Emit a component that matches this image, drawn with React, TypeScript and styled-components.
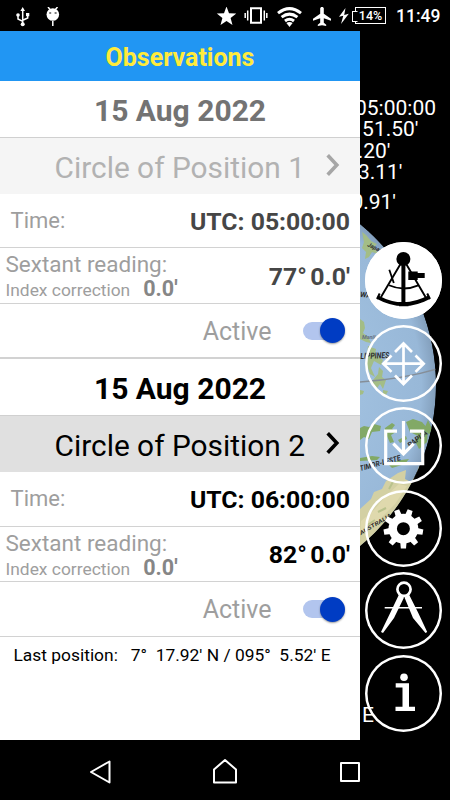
import React from "react";
import styled, { createGlobalStyle } from "styled-components";

const GlobalStyle = createGlobalStyle`
  * { box-sizing: border-box; }
  body { margin: 0; background: #000; font-family: Roboto, "Liberation Sans", sans-serif; }
`;

const Screen = styled.div`
  width: 450px;
  height: 800px;
  background: #000;
  display: grid;
  grid-template-rows: 31px 709px 60px;
  overflow: hidden;
`;

const StatusBar = styled.header`
  display: flex;
  justify-content: space-between;
  color: #fff;
`;

const StatusGroup = styled.div<{ $start?: boolean }>`
  display: flex;
  align-items: center;
  padding: ${(p) => (p.$start ? "2px 0 0 16px" : "2px 10px 0 0")};
  gap: ${(p) => (p.$start ? "16px" : "0")};
`;

const StatusIcon = styled.svg<{ $gap?: number }>`
  display: block;
  flex: none;
  margin-right: ${(p) => p.$gap ?? 0}px;
`;

const Battery = styled.div`
  width: 31px;
  height: 17px;
  border: 1px solid #fff;
  margin: -2px 10px 0 2px;
  position: relative;
  font-size: 12.5px;
  font-weight: 500;
  line-height: 16px;
  text-align: center;
  &::before {
    content: "";
    position: absolute;
    left: -4px;
    top: 3px;
    width: 4px;
    height: 9px;
    border: 1px solid #fff;
    border-right-color: #000;
    background: #000;
  }
`;

const Clock = styled.span`
  font-size: 17.5px;
  font-weight: 500;
  line-height: 20px;
  margin-top: -1px;
  width: 44px;
  white-space: nowrap;
`;

const Main = styled.main`
  display: grid;
  grid-template-columns: 360px 90px;
  min-height: 0;
`;

const Drawer = styled.section`
  background: #fff;
  display: flex;
  flex-direction: column;
`;

const Title = styled.h1`
  margin: 0;
  height: 50px;
  background: #2196f3;
  color: #ffeb3b;
  font-size: 25px;
  font-weight: 700;
  line-height: 53px;
  text-align: center;
`;

const Observation = styled.article<{ $last?: boolean }>`
  border-bottom: ${(p) => (p.$last ? "1px" : "2px")} solid #d2d2d2;
`;

const DateRow = styled.h2<{ $dim: boolean }>`
  margin: 0;
  height: 57px;
  border-bottom: 1px solid #d0d0d0;
  font-size: 30px;
  font-weight: 700;
  line-height: 59px;
  text-align: center;
  color: ${(p) => (p.$dim ? "#737373" : "#000")};
`;

const CircleRow = styled.div<{ $dim: boolean }>`
  height: 56px;
  display: flex;
  align-items: center;
  justify-content: space-between;
  padding: 2px 19.5px 0 54.5px;
  font-size: 29.85px;
  color: ${(p) => (p.$dim ? "#b2b2b2" : "#000")};
  background: ${(p) => (p.$dim ? "#f5f5f5" : "#e0e0e0")};
`;

const Row = styled.div<{ $h: number }>`
  height: ${(p) => p.$h}px;
  display: flex;
  align-items: center;
  justify-content: space-between;
  border-bottom: 1px solid #d2d2d2;
  padding: 0 10px 0 10.5px;
  &:last-child { border-bottom: 0; }
`;

const Label = styled.span<{ $size: number }>`
  font-size: ${(p) => p.$size}px;
  line-height: 26px;
  color: #9e9e9e;
  white-space: nowrap;
`;

const Value = styled.span<{ $dim: boolean; $tight?: boolean }>`
  font-size: 24.8px;
  font-weight: 700;
  line-height: 30px;
  padding-top: 2px;
  white-space: nowrap;
  word-spacing: ${(p) => (p.$tight ? "-2.6px" : "0")};
  color: ${(p) => (p.$dim ? "#464646" : "#000")};
`;

const ReadingBlock = styled.div`
  margin: 3px 0 0 -5px;
  display: flex;
  flex-direction: column;
`;

const Correction = styled.div`
  display: flex;
  align-items: baseline;
  gap: 13px;
  line-height: 24px;
`;

const CorrectionValue = styled.strong`
  font-size: 21.5px;
  font-weight: 700;
  line-height: 24px;
  color: #868686;
`;

const ActiveGroup = styled.div`
  margin-left: auto;
  display: flex;
  align-items: center;
  gap: 31.5px;
`;

const ActiveLabel = styled(Label)`
  padding-top: 2px;
`;

const Switch = styled.span`
  width: 42px;
  height: 26px;
  display: flex;
  align-items: center;
  justify-content: flex-end;
  margin-right: 5px;
`;

const Track = styled.span`
  flex: 1;
  height: 18px;
  margin-right: -14px;
  border-radius: 9px;
  background: #b2c5ee;
`;

const Thumb = styled.span`
  width: 25px;
  height: 25px;
  border-radius: 50%;
  background: #003cc3;
  box-shadow: 0 1px 2px rgba(0, 0, 0, 0.4);
`;

const LastPosition = styled.p`
  margin: 0;
  padding: 6px 0 0 13.5px;
  font-size: 17.4px;
  line-height: 24px;
  white-space: pre;
  color: #000;
`;

const MapPane = styled.section`
  position: relative;
  overflow: hidden;
  background: #000;
`;

const Globe = styled.svg`
  position: absolute;
  left: 0;
  top: 0;
`;

const Readouts = styled.div`
  height: 211px;
  padding-top: 67px;
  position: relative;
  display: flex;
  flex-direction: column;
  color: #fff;
  font-size: 21px;
`;

const Readout = styled.div<{ $end: number; $gap?: number }>`
  height: 21.4px;
  line-height: 21px;
  flex: none;
  display: flex;
  justify-content: flex-end;
  white-space: nowrap;
  margin-top: ${(p) => p.$gap ?? 0}px;
  margin-right: ${(p) => p.$end}px;
`;

const Rail = styled.nav`
  position: relative;
  display: flex;
  flex-direction: column;
  gap: 5.5px;
  padding-left: 5px;
`;

const RoundButton = styled.button<{ $on?: boolean }>`
  width: 77px;
  height: 77px;
  padding: 0;
  flex: none;
  border: 0;
  border-radius: 50%;
  box-shadow: inset 0 0 0 2.5px #fff;
  background: ${(p) => (p.$on ? "#fff" : "transparent")};
  color: ${(p) => (p.$on ? "#000" : "#fff")};
`;

const ToolIcon = styled.svg.attrs({ width: 77, height: 77, viewBox: "0 0 77 77" })`
  display: block;
`;

const East = styled.span`
  position: absolute;
  left: 2px;
  top: 672px;
  font-size: 21px;
  line-height: 24px;
  color: #fff;
`;

const NavBar = styled.footer`
  display: flex;
  align-items: center;
  gap: 75px;
  padding-left: 75px;
`;

const NavIcon = styled.svg.attrs({ width: 50, height: 60, viewBox: "0 0 50 60" })`
  display: block;
  fill: none;
  stroke: #fff;
  stroke-width: 2;
  stroke-linejoin: round;
`;

const TEETH = [0, 40, 80, 120, 160, 200, 240, 280, 320];

type ObservedProps = { dim: boolean; n: number; time: string; degrees: string };

function Observed({ dim, n, time, degrees }: ObservedProps) {
  return (
    <Observation $last={!dim}>
      <DateRow $dim={dim}>15 Aug 2022</DateRow>
      <CircleRow $dim={dim}>
        Circle of Position {n}
        <svg width="17" height="26" viewBox="0 0 17 26" fill="none" stroke={dim ? "#a6a6a6" : "#000"} strokeWidth="3.6">
          <path d="M3.7 1.2 12.8 11 3.7 20.8" />
        </svg>
      </CircleRow>
      <Row $h={dim ? 54 : 55}>
        <Label $size={22}>Time:</Label>
        <Value $dim={dim}>UTC: {time}</Value>
      </Row>
      <Row $h={dim ? 56 : 55}>
        <ReadingBlock>
          <Label $size={22.5}>Sextant reading:</Label>
          <Correction>
            <Label $size={17.4}>Index correction</Label>
            <CorrectionValue>0.0'</CorrectionValue>
          </Correction>
        </ReadingBlock>
        <Value $dim={dim} $tight>{degrees}° 0.0'</Value>
      </Row>
      <Row $h={dim ? 53 : 54}>
        <ActiveGroup>
          <ActiveLabel $size={25}>Active</ActiveLabel>
          <Switch role="switch" aria-checked="true">
            <Track />
            <Thumb />
          </Switch>
        </ActiveGroup>
      </Row>
    </Observation>
  );
}

function GlobeView() {
  return (
    <Globe width="90" height="709" viewBox="360 31 90 709">
      <defs>
        <clipPath id="disc"><circle cx="227.5" cy="385" r="208.5" /></clipPath>
        <radialGradient id="sea" gradientUnits="userSpaceOnUse" cx="227.5" cy="385" r="208.5">
          <stop offset="0.6" stopColor="#a0c0df" />
          <stop offset="0.93" stopColor="#98b8d8" />
          <stop offset="1" stopColor="#839fbc" />
        </radialGradient>
      </defs>
      <g clipPath="url(#disc)">
        <circle cx="227.5" cy="385" r="208.5" fill="url(#sea)" />
        <g fill="#a3bd86">
          <path d="M362 232l4 3 5 6 6 3-3 3 4 7-6-2-3 5-4 2 1-7-4-4 2-6z" />
          <path d="M360 319l4 3 1 6-2 5 5 4 3 6-5-1-6-3z" />
          <path d="M368 346l8 3-1 6 8 5-2 5-7-4-3 7 4 9-5-3-4-12z" />
          <path d="M373 380l5-6 1-7 4 4-1 6 4 3-3 9-3-5-3 4-4-4z" />
          <path d="M360 390l4 1-1 3-3 1zM383 390l5 1-2 4-3-1z" />
        </g>
        <g fill="#82a966">
          <path d="M360 428l4-2 5 1 5-3 7 2-1 5-8 1-3 7-5-2-4 3z" />
          <path d="M385 428l7-5 3 2-3 4 4 3-5 3 3 7-4 1-3-7-3 1zM398 440l8-4 1 3-7 4z" />
          <path d="M406 422l7-3 9 3 6 7-1 13-8 7-4-8 3-5-8-4z" />
          <path d="M428 420l4 9-3 6-4-8zM360 458l12-2 8 1-3 3-17 1zM388 464l13-4 8-1-4 5-13 4z" />
        </g>
        <path
          d="M360 509l11-10 3-7 8-3 4-8 12-8 8-3-1 9 6 3 5-7 3-9 4 8-1 9-6 14-10 13-7 12-16 20-18 17h-5z"
          fill="#d3d0a3"
        />
        <path d="M361 521l12-10 13-15 13-12 8 2-12 18-19 19-16 12z" fill="#dfd9ad" />
        <path d="M389 489l5-9M378 512l8-4M366 526l9-6" stroke="#b9c28c" strokeWidth="2" fill="none" />
        <path d="M360 382Q404 379 437 369" fill="none" stroke="#858e98" strokeWidth="1.3" />
        <g fontFamily="Roboto, sans-serif" fontStyle="italic" fontWeight="700" fill="#2c2c2c">
          <text transform="translate(367 246) rotate(26)" fontSize="6">Japan</text>
          <text transform="translate(360 297) rotate(4)" fontSize="7.5">WAN</text>
          <text transform="translate(360.5 359) rotate(-2)" fontSize="8.5" textLength="29" lengthAdjust="spacingAndGlyphs">LIPPINES</text>
          <text transform="translate(362 339)" fontSize="5.5" fill="#667384">Manila</text>
          <text transform="translate(360.5 471) rotate(-15)" fontSize="7.5" textLength="42" lengthAdjust="spacingAndGlyphs">TIMOR-LESTE</text>
          <text transform="translate(410 448) rotate(-38)" fontSize="7.5" textLength="23" lengthAdjust="spacingAndGlyphs">PAPUA</text>
          <text transform="translate(361 535) rotate(-31)" fontSize="5.5" textLength="36" lengthAdjust="spacingAndGlyphs">AUSTRALIA</text>
        </g>
      </g>
    </Globe>
  );
}

function Status() {
  return (
    <StatusBar>
      <StatusGroup $start>
        <StatusIcon width="14" height="20" viewBox="0 0 14 20" fill="none" stroke="#fff" strokeWidth="1.5">
          <path d="M6.7 2v15M2 9v3l4.7 2.4M11.7 8v3L6.7 13.2" />
          <path d="M6.7 0 9 4H4.4zM10 6h3.3v3.2H10z" fill="#fff" stroke="none" />
          <circle cx="2" cy="8" r="1.8" fill="#fff" stroke="none" />
          <circle cx="6.7" cy="17.3" r="2" fill="#fff" stroke="none" />
        </StatusIcon>
        <StatusIcon width="14" height="20" viewBox="0 0 14 20">
          <circle cx="6.8" cy="7.5" r="6.3" fill="#fff" />
          <path d="M2 0l2.5 3M11.5 0 9 3M6.8 14v5" stroke="#fff" strokeWidth="1.5" />
          <path d="M3.2 6h2M8.6 6h2" stroke="#000" strokeWidth="1.2" />
        </StatusIcon>
      </StatusGroup>
      <StatusGroup>
        <StatusIcon $gap={8} width="20" height="20" viewBox="0 0 20 20" fill="#fff">
          <path d="M10.500-.5l2.500 6.800 7.200.3-5.600 4.500 1.900 7-6-4-6 4 1.900-7L.8 6.600 8 6.300z" />
        </StatusIcon>
        <StatusIcon $gap={9} width="24" height="20" viewBox="0 0 24 20" fill="none" stroke="#fff">
          <path d="M7 1.200h10v14.600H7z" strokeWidth="2" />
          <path d="M3.700 3.500v10M20.300 3.500v10M1.200 6v5M22.800 6v5" strokeWidth="1.500" />
        </StatusIcon>
        <StatusIcon $gap={11} width="25" height="20" viewBox="0 0 25 20" fill="none" stroke="#fff" strokeWidth="3">
          <path d="M1 6.200Q12.500-3 24 6.200M4.600 10.100q7.900-6 15.800 0M8 14q4.500-3.500 9 0" />
          <path d="M9.400 16Q12.500 13.800 15.600 16l-3.100 4z" fill="#fff" stroke="none" />
        </StatusIcon>
        <StatusIcon $gap={8} width="18" height="20" viewBox="0 0 18 20" fill="#fff">
          <path d="M7.200 1.300Q9-2 10.800 1.300v5.400l7.200 5v2l-7.200-2.400v4.500l2.400 2v1.300L9 18.200l-4.200.9v-1.300l2.400-2v-4.500L0 13.700v-2l7.200-5z" />
        </StatusIcon>
        <StatusIcon $gap={4} width="10" height="17" viewBox="0 0 10 17" fill="#fff">
          <path d="M6.500 0 0 8.800l4.300-1L2 16 9.800 5.700 5.200 7z" />
        </StatusIcon>
        <Battery>14%</Battery>
        <Clock>11:49</Clock>
      </StatusGroup>
    </StatusBar>
  );
}

function Tools() {
  return (
    <Rail>
      <RoundButton $on aria-label="Sextant">
        <ToolIcon fill="none" stroke="currentColor">
          <circle cx="38.4" cy="17" r="7" fill="currentColor" stroke="none" />
          <path d="M38.4 17v46" strokeWidth="4" />
          <path d="M35.5 22 16 55M41.2 22 60.5 55" strokeWidth="1.9" />
          <path d="M13 55.300Q38.400 69 64 55.300" strokeWidth="3.800" />
          <path d="M14.700 51.500 12 57M62.200 51.500 65 57" strokeWidth="2" />
          <path d="M24 43.300q14.400 6.400 29.300 0M24.300 27.700 28.800 41" strokeWidth="1.800" />
          <path d="M43.300 29.500h9.400V31h7v5h-7v2h-9.400zM34 60h9.500v4.300H34z" fill="currentColor" stroke="none" />
        </ToolIcon>
      </RoundButton>
      <RoundButton aria-label="Move">
        <ToolIcon fill="none" stroke="currentColor" strokeWidth="2.7">
          <path d="M18.500 38.700h40M38.500 19v40M30 27l8.500-8.500L47 27M30 50.500l8.500 8.500 8.500-8.500M26.500 30.500l-8.200 8.200 8.200 8.200M50.500 30.500l8.200 8.200-8.200 8.200" />
        </ToolIcon>
      </RoundButton>
      <RoundButton aria-label="Save">
        <ToolIcon fill="none" stroke="currentColor" strokeWidth="3.2">
          <path d="M32 24.200H20.700v32.500h37V24.200H45M38.500 14v33M28.300 36.700l10.200 10.200 10.200-10.200" />
        </ToolIcon>
      </RoundButton>
      <RoundButton aria-label="Settings">
        <ToolIcon>
          <circle cx="38.4" cy="38.7" r="10.7" fill="none" stroke="currentColor" strokeWidth="8.4" />
          {TEETH.map((a) => (
            <path key={a} d="M35.200 51.500h6.400l-.6 7h-5.200z" fill="currentColor" transform={`rotate(${a} 38.4 38.7)`} />
          ))}
        </ToolIcon>
      </RoundButton>
      <RoundButton aria-label="Dividers">
        <ToolIcon fill="none" stroke="currentColor">
          <circle cx="39" cy="17.3" r="6.6" strokeWidth="2.7" />
          <path d="M19.700 35.700H57" strokeWidth="1.400" />
          <path d="M34 22.500l5 3L29 46 18 61l-2-1 9.200-19zM44 22.500l-4.500 3L48 46l12.500 15 1.700-1-8.900-19z" fill="currentColor" stroke="none" />
        </ToolIcon>
      </RoundButton>
      <RoundButton aria-label="Information">
        <ToolIcon fill="currentColor">
          <circle cx="39" cy="22.3" r="3.8" />
          <path d="M30.700 28.300H44v23.500h6V56H30.500v-4.200h7V32.500h-6.800z" />
        </ToolIcon>
      </RoundButton>
    </Rail>
  );
}

export default function App() {
  return (
    <>
      <GlobalStyle />
      <Screen>
        <Status />
        <Main>
          <Drawer>
            <Title>Observations</Title>
            <Observed dim n={1} time="05:00:00" degrees="77" />
            <Observed dim={false} n={2} time="06:00:00" degrees="82" />
            <LastPosition>{"Last position:   7°  17.92' N / 095°  5.52' E"}</LastPosition>
          </Drawer>
          <MapPane>
            <GlobeView />
            <East>E</East>
            <Readouts>
              <Readout $end={14}>05:00:00</Readout>
              <Readout $end={31.5}>51.50'</Readout>
              <Readout $end={59.5}>.20'</Readout>
              <Readout $end={47.5}>3.11'</Readout>
              <Readout $end={54} $gap={8}>0.91'</Readout>
            </Readouts>
            <Tools />
          </MapPane>
        </Main>
        <NavBar>
          <NavIcon><path d="M34.5 21.5v21L16 32z" /></NavIcon>
          <NavIcon><path d="M14 42.5v-13L25 20l11 9.5v13z" /></NavIcon>
          <NavIcon><path d="M16 23h18v18H16z" /></NavIcon>
        </NavBar>
      </Screen>
    </>
  );
}
